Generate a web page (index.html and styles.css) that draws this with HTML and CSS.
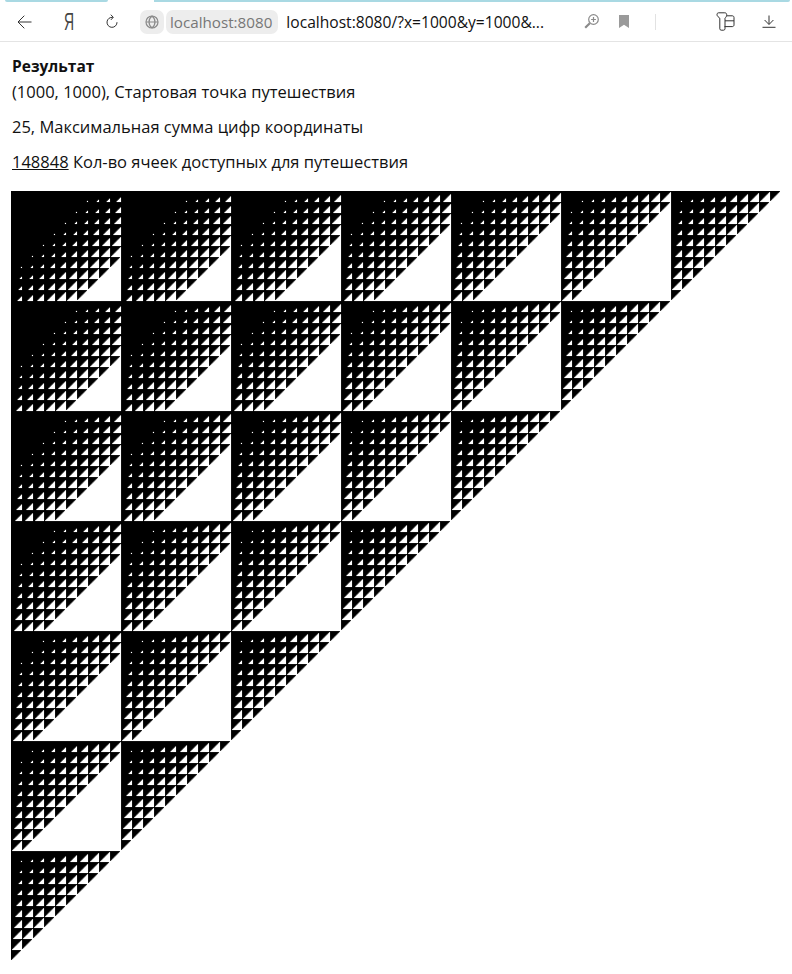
FILE: index.html
```html
<!DOCTYPE html>
<html lang="ru">
<head>
<meta charset="utf-8">
<title>localhost:8080</title>
<link rel="stylesheet" href="styles.css">
</head>
<body>
<header class="browser">
  <div class="accent">
    <span class="accent-left"></span>
    <span class="accent-right"></span>
  </div>
  <div class="toolbar">
    <button class="tool tool-back" aria-label="Назад">
      <svg width="15" height="14" viewBox="0 0 15 14"><path d="M14.500 7H1M7.300.7 1 7l6.300 6.300" class="ic"/></svg>
    </button>
    <span class="tool tool-ya">Я</span>
    <button class="tool tool-reload" aria-label="Обновить">
      <svg width="12" height="15" viewBox="0 0 12 15"><path d="M6.800 3.400A5 5 0 1 0 11 8.200M4.800.7 7.300 3.300 4.900 5.900" class="ic"/></svg>
    </button>
    <span class="site-icon">
      <svg width="14" height="14" viewBox="0 0 14 14"><circle cx="7" cy="7" r="6" class="ic-grey"/><path d="M1 7h12M7 1C4.500 3 4 5 4 7s.5 4 3 6M7 1c2.500 2 3 4 3 6s-.5 4-3 6" class="ic-grey"/></svg>
    </span>
    <span class="site-chip">localhost:8080</span>
    <span class="url">localhost:8080/?x=1000&amp;y=1000&amp;...</span>
    <span class="spring"></span>
    <span class="tool tool-zoom">
      <svg width="15" height="15" viewBox="0 0 15 15"><circle cx="9.500" cy="5.500" r="4.800" class="ic-grey"/><path d="M7.100 5.500h4.800M9.500 3.100v4.800" class="ic-grey"/><path d="M5.800 9.200 1.200 13.800" class="ic-thick"/></svg>
    </span>
    <span class="tool tool-mark">
      <svg width="10" height="13" viewBox="0 0 10 13"><path d="M0 0h10v13L5 9.800 0 13z" class="fill-grey"/></svg>
    </span>
    <span class="divider"></span>
    <span class="tool tool-wallet">
      <svg width="19" height="19" viewBox="0 0 19 19"><path d="M2.500 .8h6.300c1.200 0 1.900.8 1.900 1.900v.6c0 1-.9 2-1.700 2.900v10.600c0 .8-.6 1.400-1.400 1.400H5.200c-.8 0-1.400-.6-1.400-1.400V6.200C2.800 5.200 1 4.300 1 2.800 1 1.600 1.500.8 2.500.8zM10.700 3.800h5.600c1 0 1.700.7 1.700 1.700v7.400c0 1-.7 1.700-1.700 1.700H8.500M9 8.800h9" class="ic"/></svg>
    </span>
    <span class="tool tool-down">
      <svg width="14" height="13" viewBox="0 0 14 13"><path d="M7 .5v8.700M2.600 5 7 9.500 11.400 5M.5 12.300h13" class="ic"/></svg>
    </span>
  </div>
</header>
<main class="page">
  <p class="line line-title"><b>Результат</b></p>
  <p class="line">(1000, 1000), Стартовая точка путешествия</p>
  <p class="line line-gap">25, Максимальная сумма цифр координаты</p>
  <p class="line line-gap"><u id="count">148848</u> Кол-во ячеек доступных для путешествия</p>
  <canvas id="field" class="field" width="700" height="700"></canvas>
</main>
<script src="script.js"></script>
</body>
</html>
```
FILE: styles.css
```css
* { box-sizing: border-box; }
html, body { margin: 0; padding: 0; background: #fff; overflow: hidden; }
body { height: 974px; font-family: "Open Sans", "Noto Sans", sans-serif; color: #111; }

.browser { height: 42px; border-bottom: 1px solid #e4e4e4; background: #fff; }
.accent { display: flex; height: 2px; }
.accent-left { width: 103px; margin-left: 5px; background: #a9d9e3; border-bottom-right-radius: 2px; border-bottom-left-radius: 2px; }
.accent-right { flex: 1; margin-left: 46px; margin-right: 2px; background: #a9d9e3; border-bottom-right-radius: 2px; }

.toolbar { display: flex; align-items: center; height: 39px; padding-left: 17px; }
.tool { display: flex; align-items: center; justify-content: center; padding: 0; border: 0; background: none; flex: none; }
.ic { fill: none; stroke: #333; stroke-width: 1; }
.ic-grey { fill: none; stroke: #8a8a8a; stroke-width: 1.200; }
.ic-thick { fill: none; stroke: #8a8a8a; stroke-width: 2.200; }
.fill-grey { fill: #9a9a9a; }

.tool-back { width: 15px; }
.tool-ya { width: 16px; margin-left: 29px; font-size: 24px; line-height: 22px; color: #444; font-family: "Liberation Sans", sans-serif; transform: scaleX(.58); }
.tool-reload { width: 12px; margin-left: 29px; }
.site-icon { display: flex; align-items: center; justify-content: center; width: 24px; height: 24px; margin-left: 22px; border-radius: 7px; background: #ededed; flex: none; }
.site-chip { height: 24px; margin-left: 2px; padding: 0 6px 0 4px; border-radius: 7px; background: #ededed; color: #777; font-size: 15.200px; line-height: 24px; white-space: nowrap; flex: none; }
.url { margin-left: 8px; color: #111; font-size: 15.600px; white-space: nowrap; flex: none; }
.spring { flex: 1; }
.tool-zoom { width: 15px; }
.tool-mark { width: 10px; margin-left: 20px; }
.divider { width: 1px; height: 16px; margin-left: 26px; background: #e2e2e2; flex: none; }
.tool-wallet { width: 19px; margin-left: 60px; }
.tool-down { width: 14px; margin-left: 27px; margin-right: 16px; }

.page { padding: 11px 0 0 11px; }
.line { margin: 0; padding-left: 1px; font-size: 16.500px; line-height: 26px; white-space: nowrap; }
.line-gap { margin-top: 9px; }
.line b { font-size: 15.500px; font-weight: 700; }
.field { display: block; width: 770px; height: 770px; margin-top: 16px; }
```
FILE: script.js
```js
(function () {
  var SIZE = 700, START = 1000, LIMIT = 25;
  var digits = new Uint8Array(START + SIZE + 2);
  for (var n = 1; n < digits.length; n++) digits[n] = digits[Math.floor(n / 10)] + n % 10;

  var ctx = document.getElementById('field').getContext('2d');
  var img = ctx.createImageData(SIZE, SIZE);
  var seen = new Uint8Array(SIZE * SIZE);
  var stack = [0];
  var count = 0;
  seen[0] = 1;

  function visit(x, y) {
    if (x < 0 || y < 0 || x >= SIZE || y >= SIZE) return;
    var i = y * SIZE + x;
    if (seen[i] || digits[START + x] + digits[START + y] > LIMIT) return;
    seen[i] = 1;
    stack.push(i);
  }

  while (stack.length) {
    var i = stack.pop();
    var x = i % SIZE, y = Math.floor(i / SIZE);
    count++;
    img.data[i * 4 + 3] = 255;
    visit(x + 1, y);
    visit(x - 1, y);
    visit(x, y + 1);
    visit(x, y - 1);
  }
  ctx.putImageData(img, 0, 0);
  document.getElementById('count').textContent = count;
})();
```
